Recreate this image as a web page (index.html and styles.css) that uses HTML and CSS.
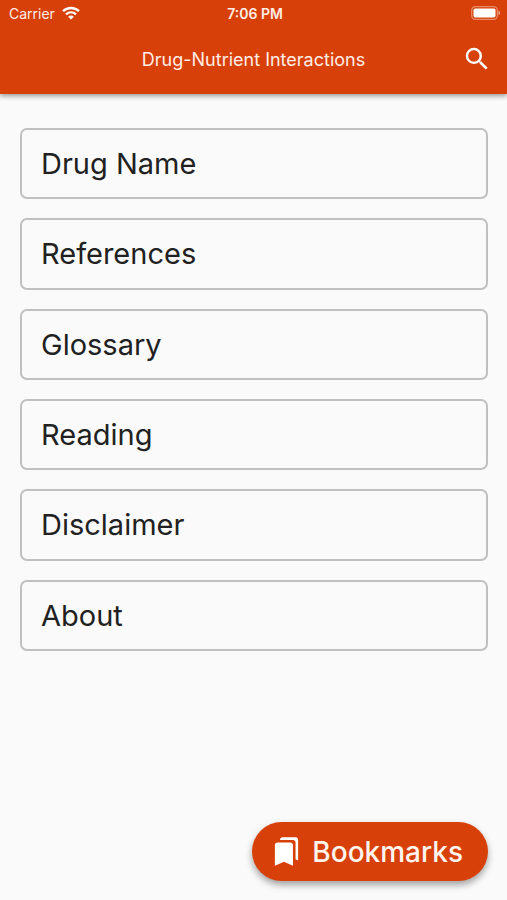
FILE: index.html
```html
<!DOCTYPE html>
<html lang="en">
<head>
<meta charset="utf-8">
<meta name="viewport" content="width=device-width, initial-scale=1">
<title>Drug-Nutrient Interactions</title>
<link rel="stylesheet" href="styles.css">
</head>
<body>
<header class="header">
  <div class="status">
    <div class="carrier">
      <span>Carrier</span>
      <svg class="wifi" viewBox="0 0 18 14" aria-hidden="true">
        <path d="M1 5.2C5.5.9 12.500.9 17 5.200M4 8.300c2.900-2.600 7.100-2.600 10 0" fill="none" stroke="currentColor" stroke-width="2.300"/>
        <path d="M9 13.600 6.100 10.700c1.700-1.500 4.100-1.500 5.800 0z" fill="currentColor"/>
      </svg>
    </div>
    <span class="time">7:06 PM</span>
    <svg class="battery" viewBox="0 0 30 14" aria-hidden="true">
      <rect x=".7" y=".7" width="25.600" height="12.600" rx="3.600" fill="none" stroke="currentColor" stroke-width="1.200" opacity=".4"/>
      <rect x="2.500" y="2.500" width="22" height="9" rx="1.800" fill="currentColor"/>
      <path d="M27.500 4.600c2.300 1 2.300 3.800 0 4.800z" fill="currentColor" opacity=".5"/>
    </svg>
  </div>
  <div class="toolbar">
    <h1 class="title">Drug-Nutrient Interactions</h1>
    <button class="search" type="button" aria-label="Search">
      <svg viewBox="0 0 24 24" aria-hidden="true"><path fill="currentColor" d="M15.500 14h-.79l-.28-.27A6.471 6.471 0 0 0 16 9.500 6.500 6.500 0 1 0 9.500 16c1.610 0 3.090-.59 4.230-1.570l.27.28v.79l5 4.990L20.490 19l-4.990-5zm-6 0C7.010 14 5 11.990 5 9.500S7.010 5 9.500 5 14 7.010 14 9.500 11.990 14 9.500 14z"/></svg>
    </button>
  </div>
</header>
<main class="menu">
  <button class="item" type="button">Drug Name</button>
  <button class="item" type="button">References</button>
  <button class="item" type="button">Glossary</button>
  <button class="item" type="button">Reading</button>
  <button class="item" type="button">Disclaimer</button>
  <button class="item" type="button">About</button>
</main>
<footer class="footer">
  <button class="bookmarks" type="button">
    <svg viewBox="0 0 24 24" aria-hidden="true"><path fill="currentColor" d="m19 18 2 1V3c0-1.100-.9-2-2-2H8.990C7.890 1 7 1.900 7 3h10c1.100 0 2 .9 2 2v13zM15 5H5c-1.100 0-2 .9-2 2v16l7-3 7 3V7c0-1.100-.9-2-2-2z"/></svg>
    <span>Bookmarks</span>
  </button>
</footer>
</body>
</html>
```
FILE: styles.css
```css
* {
  box-sizing: border-box;
}

body {
  display: flex;
  flex-direction: column;
  min-height: 100vh;
  margin: 0;
  background: #fafafa;
  color: #212121;
  font-family: Inter, "Liberation Sans", sans-serif;
}

button {
  font: inherit;
  cursor: pointer;
}

svg {
  display: block;
}

.header {
  background: #d84009;
  color: #fff;
  box-shadow: 0 2px 5px rgba(0, 0, 0, 0.4);
}

.status,
.toolbar {
  display: grid;
  grid-template-columns: 1fr auto 1fr;
  align-items: center;
}

.status {
  height: 26px;
  padding: 0 6px 0 9px;
  font-size: 14px;
}

.carrier {
  display: flex;
  align-items: center;
  gap: 7px;
}

.carrier,
.title,
.time {
  color: #ffeee6;
}

.wifi {
  width: 18px;
  height: 14px;
  color: #fff;
}

.time {
  font-weight: 600;
}

.battery {
  justify-self: end;
  width: 30px;
  height: 14px;
}

.toolbar {
  height: 68px;
  padding: 0 15px 2px;
}

.title {
  grid-column: 2;
  margin: 0;
  font-size: 18px;
  font-weight: 400;
}

.search {
  justify-self: end;
  padding: 0;
  border: 0;
  background: none;
  color: #fff;
}

.search svg {
  width: 30px;
  height: 30px;
}

.menu {
  display: grid;
  grid-auto-rows: 1fr;
  gap: 19px;
  min-height: 523px;
  margin: 34px 19px 0 20px;
}

.item {
  padding: 0 19px;
  border: 2px solid #c0c0c0;
  border-radius: 7px;
  background: transparent;
  color: #212121;
  font-size: 29px;
  text-align: left;
}

.footer {
  display: flex;
  justify-content: flex-end;
  margin-top: auto;
  padding: 19px;
}

.bookmarks {
  display: flex;
  align-items: center;
  gap: 10px;
  height: 59px;
  padding: 0 25px 0 19px;
  border: 0;
  border-radius: 30px;
  background: #d84009;
  color: #fff4ee;
  box-shadow: 0 4px 7px rgba(0, 0, 0, 0.35);
  font-size: 28px;
  font-weight: 500;
}

.bookmarks svg {
  width: 31px;
  height: 31px;
  color: #fff;
}
```
